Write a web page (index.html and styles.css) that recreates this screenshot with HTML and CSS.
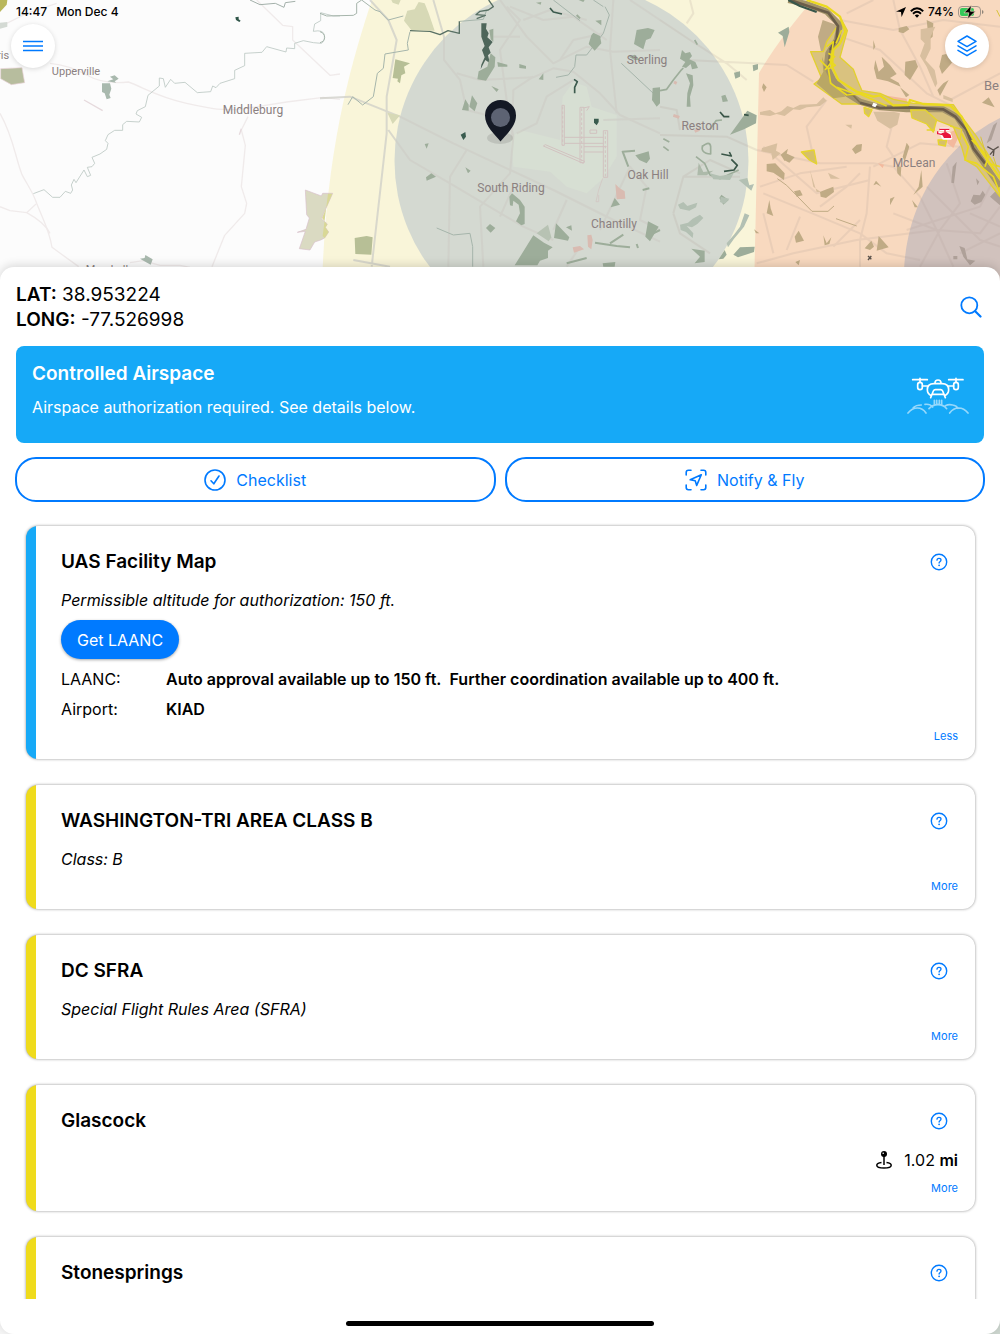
FILE: index.html
```html
<!DOCTYPE html>
<html lang="en">
<head>
<meta charset="utf-8">
<meta name="viewport" content="width=device-width, initial-scale=1">
<title>Airspace</title>
<link rel="stylesheet" href="styles.css">
</head>
<body>
<svg class="defs" width="0" height="0" aria-hidden="true">
  <symbol id="help" viewBox="0 0 18 18">
    <circle cx="9" cy="9" r="7.7" fill="none" stroke="currentColor" stroke-width="1.4"/>
    <path d="M7 7.2c0-1.2.9-1.9 2-1.9s2 .7 2 1.7c0 .9-.5 1.3-1.1 1.7-.6.4-.8.7-.8 1.4" fill="none" stroke="currentColor" stroke-width="1.3" stroke-linecap="round"/>
    <circle cx="9.1" cy="12.3" r=".9" fill="currentColor"/>
  </symbol>
</svg>
<div class="app">
  <header class="top">
    <svg class="map" viewBox="0 0 1000 290" preserveAspectRatio="xMidYMin slice" aria-hidden="true">
      <rect width="1000" height="290" fill="#fcfcfc"/>
      <path d="M372 0C352 60 325 150 322 290H1000V0Z" fill="#f9f5d9"/>
      <!-- west: open country -->
      <g transform="scale(.33333)" fill="none" stroke-linejoin="round">
        <g stroke="#f0ebeb" stroke-width="4">
          <path d="M150 190Q210 196 260 225T385 246C430 262 470 290 560 310S660 330 720 328L860 306L970 292L1020 298"/>
          <path d="M0 340C40 410 45 470 66 524C85 560 98 575 110 610C125 650 148 690 156 742L236 800"/>
          <path d="M0 620L30 632L80 638C120 660 140 680 150 700M80 638L108 612"/>
          <path d="M744 350L724 390L736 436L724 560L740 610L734 640L674 706L636 800M390 788L430 782L480 796H540L570 802"/>
          <path d="M770 0L848 76L878 80V120L990 226L1020 222M0 80L80 40L170 10"/>
        </g>
        <path d="M100 581L132 569L158 592H180L196 574L212 580L218 570L214 555L222 538L228 548L252 510L262 530L272 526L262 502L276 500L284 490L276 472L300 462L320 448L324 430L316 422L324 404L344 391H368V374L380 364L418 366L425 352L408 342L412 332L436 320L444 286L478 258V234L490 236L496 262L512 238L524 250L555 247L592 278L632 275L638 258L648 263L660 250L704 236V211L734 197V160L786 157L800 140L858 156L860 144L884 146V130L910 122L940 128L964 130Q975 124 973 106T940 94L944 72L962 62V38L1000 48H1020" stroke="#bcc8c3" stroke-width="2.5"/>
        <path d="M750 0L780 14L826 10L852 22L856 8L886 4" stroke="#a3b0aa" stroke-width="3"/>
        <path d="M252 300L308 332M724 386L718 404" stroke="#e6dadd" stroke-width="4"/>
        <path d="M0 0H22L20 14L0 36Z" fill="#b9b75c"/>
        <path d="M0 68L22 66V80L0 86Z" fill="#d4dad4"/>
        <path d="M2 206L66 203L74 248L34 254L2 236Z" fill="#b7bd9e" stroke="#ead3da" stroke-width="2"/>
        <path d="M330 230L344 226L356 236L344 244L348 248L322 244L340 238ZM306 250H330L334 266L328 284L332 294L320 298L314 280L306 276ZM420 776L434 774L436 765L458 778L452 794Z" fill="#a9b9ae"/>
        <path d="M706 52L716 50V58L722 62L718 66L708 60Z" fill="#2f5548"/>
        <path d="M916 570L964 588L968 580H998L964 656L982 672L976 682L986 696L974 714L962 720L944 726L930 750L898 746L916 694L892 697L918 688L928 654L920 644Z" fill="#dadac2" stroke="#d8bfcb" stroke-width="2"/>
        <path d="M984 581H997L966 654L982 674L976 682L986 696L974 714L968 708Z" fill="#d9d896"/>
      </g>
      <!-- class B core around the airport -->
      <circle cx="571.5" cy="161" r="177" fill="#d4d9d1"/>
      <g transform="translate(320) scale(.33333)" fill="none" stroke-linejoin="round">
        <path d="M728 290L760 245L800 260L815 320L890 345L890 470L850 535L800 580L740 560L690 515L580 500L572 415L600 390L720 420Z" fill="#d7dfd3"/>
        <g stroke="#cfcfc8" stroke-width="6" opacity=".75">
          <path d="M0 295L90 290L240 350L400 430L560 505L700 570L880 660L1020 725"/>
          <path d="M150 0L205 60L230 120L200 290V400L155 800M205 390L270 480L390 550L610 680L700 720M100 780L210 800"/>
          <path d="M340 0L372 110V180L420 240L440 330L500 345M410 220L480 240L640 232L700 205L760 215L840 280L900 345L1020 400"/>
          <path d="M540 0L620 110L700 190L800 140L880 155L1020 150M560 20L600 60L540 150L560 300L580 410L570 520L480 620L490 800"/>
          <path d="M880 0L870 150L890 340M930 0L1020 60M590 400L650 370L680 290L760 240M440 450L390 530L385 800M640 230L580 270L575 420"/>
          <path d="M850 360L1020 355M840 690L930 500L980 560L960 660L1020 690M700 690L740 600M780 740L740 800M720 180L760 120L850 100"/>
          <path d="M570 20L670 60L760 50L860 120M600 110H520M610 60L690 30L800 60M540 650L580 560"/>
        </g>
        <g stroke="#d2c2c0" stroke-width="3">
          <path d="M726 316H733V436H726ZM780 322H792V488H780ZM850 392H863V532H850ZM733 412H850M733 430H850M792 456H850M670 438L676 434L794 484L790 490ZM790 324L808 320L800 332M810 390H830V400H810ZM792 440H860"/>
          <path d="M848 535L836 570L828 605H836V585" stroke-width="2"/>
          <path d="M728 320V434M785 325V484M856 395V530" stroke-dasharray="8 6"/>
        </g>
        <g stroke="#a6b5ab" stroke-width="3">
          <path d="M0 40L20 48L100 46L110 40V10L125 0M125 0L165 30L180 35L205 60L250 48M270 95L262 130L265 150L195 162L190 205L172 220L160 290L128 315L98 290L84 314"/>
          <path d="M420 64L490 58L500 30M855 20L868 45L850 100L800 165H768L764 200L745 225L708 232M700 0L780 62M904 190L1000 280M350 684L400 705L450 700L458 740V800M820 0L850 20"/>
          <path d="M0 95Q14 100 14 112T0 128"/>
        </g>
        <path d="M270 92L330 94L360 104L384 92L418 100V64M506 0L520 20L505 30L480 34L468 44L496 46L470 56" stroke="#587064" stroke-width="4"/>
        <path d="M484 70H500L498 86L506 100L502 112L518 126L506 142L512 158L504 166L510 190L496 180L482 208L484 194L494 172L486 150L494 138L484 110Z" fill="#4e665a"/>
        <path d="M422 404L436 396L438 410L430 420ZM822 356H836V366L830 376L822 368Z" fill="#395b4e"/>
        <path d="M762 238L772 245L764 262V280M690 24L700 36L726 42" stroke="#3c5b4e" stroke-width="5"/>
        <g fill="#9dad9a">
          <path d="M508 90L520 86V125L512 118ZM512 160L526 172L524 200L498 242L472 238L476 214L502 200ZM532 186L562 194V200L534 200ZM598 192L618 198V206L598 204ZM514 258L536 268L530 276ZM656 238L670 220V240ZM436 298L446 314V332L426 330ZM456 286L472 310L464 334L448 320ZM314 432L326 430L320 446ZM318 532L334 520L348 530L320 542ZM436 502L452 512L444 520ZM498 684L510 672L526 684L512 698Z"/>
          <path d="M820 98L840 108L844 130L824 152L806 132L814 106ZM950 90L984 84L1004 90L992 115L978 120L970 148L942 132ZM826 62L844 60V76ZM998 264L1020 262V310L1010 320L996 300ZM984 664L1016 680L990 724L976 710ZM708 670L748 712L744 722L702 714ZM738 682L754 676L756 692ZM884 594L900 614L872 622ZM584 796L640 706L672 728L698 742L684 752V774L660 782L652 796ZM848 790L886 786L884 800H850ZM648 8L664 6L662 14ZM776 0L794 0L790 6ZM926 170L944 164L960 180L944 180Z"/>
          <path d="M946 466L986 454L990 476L980 490L958 480Z"/>
          <path d="M568 590L576 580L600 600L614 620V672L604 676L588 664L600 640L596 614L580 602L578 618L570 616Z"/>
        </g>
        <g stroke="#9dad9a" stroke-width="6">
          <path d="M925 500L908 455L945 452M968 570L988 565M780 55L770 45M825 728L890 738L930 742M870 730L910 704M740 790L800 774M1000 700L1020 690M950 732L954 744"/>
        </g>
        <path d="M650 700L684 674L694 712L686 724Z" fill="#b7c2b3"/>
        <path d="M252 62L262 32L284 28L296 6L314 10L326 40L344 92L274 90ZM214 0L242 0L236 14L218 8ZM202 338L240 346L218 372Z" fill="#d7d9b6"/>
        <path d="M226 178L270 190L252 200L256 220L244 226L240 250L232 244L234 236L218 234ZM104 714L140 708L158 712L154 764L106 762Z" fill="#b7bf96"/>
        <path d="M886 552L898 564L914 574L916 596L890 598ZM802 706L814 704L818 720L814 748L804 740ZM758 742L780 738L792 748L762 758Z" fill="#d9bbb1"/>
      </g>
      <!-- inner rings to the east -->
      <path d="M813 0C795 20 773 49 759 73L754 290H1000V0Z" fill="#f8d9bf"/>
      <path d="M1000 118C955 140 900 195 904 290H1000Z" fill="#d1c2bd"/>
      <g transform="translate(660) scale(.33333)" fill="none" stroke-linejoin="round">
        <g stroke="#b6a39b" stroke-width="6" opacity=".2">
          <path d="M0 60L90 120L200 190L260 240M80 180L380 195L460 245M0 405L200 410L290 450L480 490H640L700 500L780 590L830 690L960 700L1020 620"/>
          <path d="M630 500L620 640L600 720V800M290 790L400 760L590 720L830 690M300 560L420 520L560 500M310 580L480 650L600 700M640 500L780 430L900 440"/>
          <path d="M540 60L700 90L850 60L1020 80M540 110L660 150L800 280L880 320M560 40L640 0M700 0L720 90L780 200L820 290M870 300L1020 220"/>
          <path d="M40 640L70 530L150 480L240 520M70 530H240M40 640L60 700L150 760M480 620L560 560L600 520M460 470L440 380L500 300M520 740L600 660M310 640L340 760M700 640L830 690L880 800M740 690L960 620L1000 540M800 560L960 720L1020 740M860 490L900 610L840 690L780 800M930 640L1020 680M900 760L1020 700M310 440L470 580L630 540"/>
          <path d="M90 0L100 40L80 70M600 700L680 760L780 780M0 320L50 330L60 390M720 500L680 440L700 360M380 750L420 650"/>
        </g>
        <g fill="#c0ab85">
          <path d="M488 60L530 75L520 140L485 165L474 110ZM716 84L740 78L748 88L730 100L716 96ZM800 60L820 70L818 110L806 120ZM846 165L868 160L876 188L846 222L838 200ZM736 185L766 180L774 200L750 240L734 225ZM646 180L656 215L672 200L665 170L690 195L710 222L690 234L716 248L722 260L684 244L650 236L642 205ZM720 262L748 285L738 292ZM966 308L986 292L1004 322Z"/>
          <path d="M576 448L590 434L606 432L604 452L586 462ZM480 576L500 568L520 560L522 576L498 594L482 590ZM378 460L404 472L388 488L372 480ZM404 710L416 692L432 722L408 728ZM614 745L634 722L642 740L630 750ZM656 708L686 742L650 752ZM310 250L320 262L312 276L306 262ZM320 492L346 490L374 520L372 540L340 518L320 514ZM640 556L648 542L664 560L650 552ZM710 498L724 500L722 530L712 520ZM756 600L774 622L764 622ZM402 574L420 570L428 586L410 590ZM328 600L332 625L340 648L320 640ZM282 688L298 700L288 700ZM490 706L500 730L514 712L508 732L494 736ZM406 786L420 780L416 796ZM362 464L384 446L374 484Z"/>
          <path d="M740 428L728 470L734 485L748 440ZM784 510L776 560L760 585L788 560ZM850 250L866 240L840 288L832 270ZM640 120L646 140L640 150ZM690 596L704 590L690 616Z"/>
        </g>
        <g fill="#d8bf9f">
          <path d="M782 88L826 80L812 110V146L796 180L824 210L832 250L826 262L800 200L780 168L794 130L782 118ZM640 335H700L720 340L712 374L690 386L652 362ZM300 336L330 330L346 340L364 334L382 318L400 324L420 314L470 312L490 292L500 302L480 318L440 322L420 330L400 328L374 348L350 342L330 348L300 344ZM306 444L352 430L348 452L362 460L338 480L334 460L304 454ZM504 518L540 536H512ZM450 510L460 560L482 576L470 576ZM556 374H576L574 386ZM850 285L878 296V306L850 296Z"/>
        </g>
        <path d="M352 536L380 556L456 634H504L522 618M528 656L590 678" stroke="#c0ab85" stroke-width="3"/>
        <g fill="#9dad9a">
          <path d="M210 404L262 332L290 346L288 370L252 388ZM222 218L240 214V230L226 236ZM278 196L294 192V208L280 214ZM184 288L196 284L204 304L188 306ZM354 98L386 80L388 96L374 142L368 108ZM176 778L194 750L200 764L190 776ZM220 764L240 742L284 740L282 756L234 772ZM94 746L134 752V786L104 790L120 770ZM184 584L206 600L190 614L178 594Z"/>
          <path d="M116 488L130 516L160 512L140 526H112Z" opacity=".7"/>
          <path d="M66 150L76 160L90 156L96 168L88 178L106 186L114 204L96 208L92 192L78 204L66 200L76 186L60 176ZM78 220L98 226L100 256L90 290L92 320H80L82 280L90 250Z"/>
        </g>
        <g stroke="#9dad9a" stroke-width="5">
          <path d="M150 388L168 362L186 360M10 416L28 426M10 440L26 452M104 120L112 134M0 272L20 268L40 240L62 212L70 204"/>
          <path d="M126 440Q150 420 152 440V462Q120 460 128 436M108 470L134 490L150 525L180 536L210 522L236 510"/>
        </g>
        <g fill="#b3c0b3">
          <path d="M54 614L70 606L82 618L112 608L108 622L88 632L60 626ZM60 674L84 668L98 656L120 644L130 654L112 672L96 682L80 678L100 700L98 714L78 696L62 690ZM254 640L268 646L252 680L236 700L222 716L204 742L200 730L222 704L240 680ZM236 540L262 534L268 556L282 552L274 572L260 560ZM150 520L180 528L220 522L210 540L160 538ZM182 590L208 596L194 612L180 606Z"/>
        </g>
        <path d="M180 336L192 350H208M184 462L214 468L208 456M214 478L232 496L222 510L192 514M252 344L266 346" stroke="#3a5648" stroke-width="5"/>
        <path d="M42 246L50 250M40 346L58 352M104 394L118 388" stroke="#d9bbb1" stroke-width="9"/>
        <path d="M672 286L740 296L742 312L700 308ZM654 490L672 494L668 504ZM862 400L886 390L896 410L880 444L862 430Z" fill="#f3b99d"/>
        <g fill="#afa199">
          <path d="M932 604L940 584L960 586L968 572L976 584L964 606L944 614ZM898 738L914 744L922 778L946 782L930 796L910 770ZM1000 376L1012 366L994 420L980 430ZM948 535L958 545L952 556ZM880 768H892V778H880ZM878 500L890 485L882 550L874 548ZM990 590L1020 560V616Z"/>
        </g>
        <path d="M982 440L1000 450L1016 440M990 464L1002 450L1000 468M624 768L634 778M634 768L624 780" stroke="#5c534c" stroke-width="4"/>
        <!-- Potomac corridor -->
        <path d="M452 155L490 155L500 125L545 60L562 92L540 172L580 208L592 240L606 272L660 280L700 298L760 310L880 314L905 350L950 410L1020 520V590L950 500L916 480L905 440L880 380L750 330L640 325L600 312L545 312L462 252L485 235Z" fill="#d9c27f" stroke="#e2d02f" stroke-width="4"/>
        <path d="M486 170L500 210L530 262L556 290L520 295L470 250L490 215Z" fill="#b9a765"/>
        <path d="M385 0L440 12L500 35L540 75L530 120L505 160L500 200L520 240L560 280L600 305L660 322L740 328L850 328L890 350L920 395L945 450L1020 560" stroke="#a3936a" stroke-width="18"/>
        <path d="M390 0L450 20L505 38L534 78L530 118L510 150M600 308L660 324L740 322L850 328L886 350L920 390L940 445L975 490" stroke="#6b5d4a" stroke-width="8"/>
        <path d="M510 150L504 200M560 284L580 286L600 308" stroke="#857550" stroke-width="5"/>
        <path d="M385 0L420 18L470 36" stroke="#38564a" stroke-width="7"/>
        <path d="M440 0L500 20L540 50L556 95L540 130L520 150L516 200L535 240L590 275L640 290L660 286L700 316L745 315L750 300L790 312L870 316L905 350L930 400L955 440L1020 535" stroke="#ead91f" stroke-width="7"/>
        <path d="M500 140L520 125L512 190L495 210M480 180L505 205L512 250L560 285L600 282L640 300L680 318M530 262L580 280M545 90L528 130M905 400L925 440L915 480L950 490L1000 530L1020 580M935 420L985 470L975 500M985 490L1020 500M505 160L524 170L508 180L526 196L506 206" stroke="#ead91f" stroke-width="5"/>
        <path d="M752 330H796L830 360L820 396L800 372L756 354ZM424 456L462 450L470 492L448 480ZM612 322L636 330L626 350L614 340ZM834 420H860L856 438L836 434Z" fill="#d6c06a" stroke="#e6d52c" stroke-width="4"/>
        <path d="M800 390H825M870 378L905 388L900 420" stroke="#e6d52c" stroke-width="4"/>
        <path d="M640 308L652 312L646 322L636 318Z" fill="#fff"/>
        <path d="M962 410L980 470M1010 30L1020 50M1000 470L1010 500" stroke="#d8c33a" stroke-width="3"/>
        <!-- heliport marker -->
        <g stroke="#fff" stroke-width="10"><path d="M840 388H868M834 399L850 404M846 402H868L872 414H850Z"/></g>
        <path d="M838 388H868M833 394V401L848 404M855 388V398" stroke="#e8183c" stroke-width="4"/>
        <path d="M844 400L858 396L872 404L874 414H852Z" fill="#e8183c"/>
      </g>
      <g class="place" text-anchor="middle">
        <text x="76" y="75" font-size="11">Upperville</text>
        <text x="253" y="114" font-size="12">Middleburg</text>
        <text x="-3" y="59" font-size="11" text-anchor="start">ris</text>
        <text x="107" y="273" font-size="11">Marshall</text>
        <text x="511" y="192" font-size="12">South Riding</text>
        <text x="647" y="64" font-size="12">Sterling</text>
        <text x="700" y="130" font-size="12">Reston</text>
        <text x="648" y="179" font-size="12">Oak Hill</text>
        <text x="614" y="228" font-size="12">Chantilly</text>
        <text x="914" y="167" font-size="12">McLean</text>
        <text x="984" y="90" font-size="13" text-anchor="start">Be</text>
      </g>
      <ellipse cx="500" cy="138" rx="13" ry="6" fill="#000" opacity=".1"/>
      <path d="M500.500 141.500C495 134 485 127 485 115.500A15.500 15.500 0 0 1 516 115.500C516 127 506 134 500.500 141.500Z" fill="#141925"/>
      <circle cx="500.500" cy="117.500" r="9.500" fill="#5d6373"/>
    </svg>
    <div class="status">
      <div class="status-side"><span>14:47</span><span>Mon Dec 4</span></div>
      <div class="status-side tight">
        <svg width="10" height="10" viewBox="0 0 10 10" aria-hidden="true"><path d="M10 0L5.600 10L5 5.100L0 4.500Z"/></svg>
        <svg width="14" height="11" viewBox="0 0 14 11" fill="none" stroke="#000" stroke-width="1.900" aria-hidden="true"><path d="M.8 4.200Q7-1.600 13.200 4.200M3 6.700Q7 3 11 6.700"/><path d="M7 10.800L4.800 8.500Q7 6.700 9.200 8.500Z" fill="#000" stroke="none"/></svg>
        <span>74%</span>
        <svg width="26" height="14" viewBox="0 0 26 14" aria-hidden="true"><rect x=".5" y="1.500" width="22" height="11" rx="3.500" fill="none" stroke="#a3968a"/><path d="M24 5v4q1.500-.5 1.500-2T24 5Z" fill="#8f8478"/><rect x="2" y="3" width="14" height="8" rx="2" fill="#34c759"/><path d="M13.500 0L6 7.800H10.800L9.500 14L17.500 6.200H12.500Z" fill="#000" stroke="#f8d9bf" stroke-width=".7"/></svg>
      </div>
    </div>
    <div class="controls">
      <button class="round" type="button" aria-label="Menu">
        <svg width="20" height="12" viewBox="0 0 20 12" stroke="currentColor" stroke-width="1.400" aria-hidden="true"><path d="M0 1.500H20M0 6H20M0 10.500H20"/></svg>
      </button>
      <button class="round" type="button" aria-label="Map layers">
        <svg width="20" height="22" viewBox="0 0 20 22" fill="none" stroke="currentColor" stroke-width="1.500" stroke-linejoin="round" stroke-linecap="round" aria-hidden="true"><path d="M10 1L19 6.300L10 11.600L1 6.300ZM1 10.800L10 16.100L19 10.800M1 15.400L10 20.700L19 15.400"/></svg>
      </button>
    </div>
  </header>

  <main class="sheet">
    <div class="coords">
      <div>
        <div><b>LAT:</b> 38.953224</div>
        <div><b>LONG:</b> -77.526998</div>
      </div>
      <button class="icon-button" type="button" aria-label="Search">
        <svg width="22" height="22" viewBox="0 0 22 22" fill="none" stroke="currentColor" stroke-linecap="round" aria-hidden="true"><circle cx="9.300" cy="9.300" r="8" stroke-width="1.800"/><path d="M15.200 15.200L20.500 20.500" stroke-width="2.200"/></svg>
      </button>
    </div>

    <section class="banner">
      <div>
        <h1>Controlled Airspace</h1>
        <p>Airspace authorization required. See details below.</p>
      </div>
      <svg width="62" height="38" viewBox="81 315 186 114" fill="none" stroke="#fff" stroke-width="5" stroke-linecap="round" stroke-linejoin="round" aria-hidden="true">
        <path d="M98 326H142M120 322V334M206 326H249M228 322V334M127 345H145M221 345H203M165 336Q165 327 174 327T183 336"/>
        <rect x="113" y="334" width="14" height="22" rx="7"/><rect x="221" y="334" width="14" height="22" rx="7"/>
        <path d="M154 374Q142 368 142 356Q142 338 162 338H186Q206 338 206 356Q206 368 194 374M152 380L160 360Q162 356 166 356H182Q186 356 188 360L196 380M158 370H190"/>
        <g opacity=".55"><path d="M163 388V399M170 388V399M178 388V399M185 388V399M84 426Q96 411 112 411T138 426M100 410Q108 402 124 402M135 400Q150 398 158 408M147 413Q158 401 174 401T200 413M196 404Q206 399 218 402Q230 404 234 412M209 426Q220 411 236 411T264 426"/></g>
      </svg>
    </section>

    <div class="actions">
      <button class="outline" type="button">
        <svg width="22" height="22" viewBox="0 0 22 22" fill="none" stroke="currentColor" stroke-width="1.600" stroke-linecap="round" stroke-linejoin="round" aria-hidden="true"><circle cx="11" cy="11" r="10"/><path d="M7 11.800L9.800 14.800L15 7"/></svg>
        Checklist
      </button>
      <button class="outline" type="button">
        <svg width="22" height="22" viewBox="0 0 22 22" fill="none" stroke="currentColor" stroke-width="1.600" stroke-linecap="round" stroke-linejoin="round" aria-hidden="true"><path d="M1.200 6V3.400Q1.200 1.200 3.400 1.200H6M16 1.200H18.600Q20.800 1.200 20.800 3.400V6M20.800 16V18.600Q20.800 20.800 18.600 20.800H16M6 20.800H3.400Q1.200 20.800 1.200 18.600V16"/><path d="M16.300 5.700L5.200 10.800L10.200 11.800L11.700 16.400Z"/></svg>
        Notify &amp; Fly
      </button>
    </div>

    <div class="list">
      <article class="card info">
        <div class="card-head"><h2>UAS Facility Map</h2><button class="icon-button" type="button" aria-label="Help"><svg width="18" height="18"><use href="#help"/></svg></button></div>
        <p class="summary"><i>Permissible altitude for authorization: 150 ft.</i></p>
        <button class="primary" type="button">Get LAANC</button>
        <table class="facts">
          <tr><th scope="row">LAANC:</th><td>Auto approval available up to 150 ft.&nbsp; Further coordination available up to 400 ft.</td></tr>
          <tr><th scope="row">Airport:</th><td>KIAD</td></tr>
        </table>
        <a class="toggle" href="#">Less</a>
      </article>
      <article class="card">
        <div class="card-head"><h2>WASHINGTON-TRI AREA CLASS B</h2><button class="icon-button" type="button" aria-label="Help"><svg width="18" height="18"><use href="#help"/></svg></button></div>
        <p class="summary"><i>Class: B</i></p>
        <a class="toggle" href="#">More</a>
      </article>
      <article class="card">
        <div class="card-head"><h2>DC SFRA</h2><button class="icon-button" type="button" aria-label="Help"><svg width="18" height="18"><use href="#help"/></svg></button></div>
        <p class="summary"><i>Special Flight Rules Area (SFRA)</i></p>
        <a class="toggle" href="#">More</a>
      </article>
      <article class="card">
        <div class="card-head"><h2>Glascock</h2><button class="icon-button" type="button" aria-label="Help"><svg width="18" height="18"><use href="#help"/></svg></button></div>
        <p class="summary distance">
          <svg width="16" height="18" viewBox="0 0 16 18" fill="none" stroke="#000" aria-hidden="true"><circle cx="8" cy="3" r="3" fill="#000" stroke="none"/><circle cx="7.200" cy="2.200" r=".8" fill="#fff" stroke="none"/><path d="M8 5V14" stroke-width="1.500"/><path d="M5.500 11.600Q.8 12.300.8 14.200C.8 18 15.200 18 15.200 14.200Q15.200 12.300 10.500 11.600" stroke-width="1.500"/></svg>
          <span>1.02 <b>mi</b></span>
        </p>
        <a class="toggle" href="#">More</a>
      </article>
      <article class="card">
        <div class="card-head"><h2>Stonesprings</h2><button class="icon-button" type="button" aria-label="Help"><svg width="18" height="18"><use href="#help"/></svg></button></div>
      </article>
    </div>
    <div class="home"><span></span></div>
  </main>
</div>
</body>
</html>
```
FILE: styles.css
```css
* { box-sizing: border-box; }

body {
  margin: 0;
  font-family: Inter, "Liberation Sans", sans-serif;
  font-size: 16px;
  line-height: 24px;
  color: #000;
}

h1, h2, p { margin: 0; }
b, h1, h2 { font-weight: 600; }
svg { display: block; flex: none; }

button {
  font: inherit;
  padding: 0;
  border: 0;
  background: none;
  color: #007aff;
  cursor: pointer;
}

.defs { position: absolute; }

.app {
  height: 100vh;
  display: flex;
  flex-direction: column;
  overflow: hidden;
  background: linear-gradient(90deg, #f6f6f6 50%, #cdd6cf 50%);
}

.top {
  position: relative;
  flex: none;
  height: 267px;
}

.map {
  position: absolute;
  top: 0;
  left: 0;
  width: 100%;
  height: 290px;
}

.place {
  font-family: Roboto, "Liberation Sans", sans-serif;
  fill: #8b8080;
}

.status {
  position: relative;
  display: flex;
  justify-content: space-between;
  height: 24px;
  padding: 0 16px;
  font-size: 12px;
  font-weight: 500;
}

.status-side { display: flex; align-items: center; gap: 9px; }
.status-side.tight { gap: 4px; }

.controls {
  position: relative;
  display: flex;
  justify-content: space-between;
  padding: 0 11px;
}

.round {
  width: 44px;
  height: 44px;
  border-radius: 50%;
  background: #fff;
  box-shadow: 0 1px 5px rgba(0, 0, 0, .15);
  display: grid;
  place-items: center;
}

.sheet {
  position: relative;
  flex: 1;
  min-height: 0;
  display: flex;
  flex-direction: column;
  padding-top: 15px;
  border-radius: 14px;
  background: #fff;
  box-shadow: 0 -2px 10px rgba(0, 0, 0, .14);
}

.coords {
  display: flex;
  justify-content: space-between;
  align-items: center;
  padding: 0 18px 0 16px;
  font-size: 19px;
  line-height: 25px;
}

.icon-button { display: block; }

.banner {
  display: flex;
  justify-content: space-between;
  align-items: center;
  margin: 14px 16px;
  padding: 15px 15px 24px 16px;
  border-radius: 8px;
  background: #16a9f7;
  color: #fff;
}

.banner h1 { font-size: 19px; line-height: 26px; margin-bottom: 8px; }
.banner svg { margin-top: 10px; }

.actions {
  display: grid;
  grid-template-columns: 1fr 1fr;
  gap: 9px;
  padding: 0 15px;
}

.outline {
  display: flex;
  justify-content: center;
  align-items: center;
  gap: 10px;
  height: 45px;
  border: 2px solid #007aff;
  border-radius: 21px;
}

.list {
  flex: 1;
  min-height: 0;
  overflow-y: auto;
  scrollbar-width: none;
  padding: 24px 25px 0 26px;
}

.card {
  min-height: 124px;
  margin-bottom: 26px;
  padding: 22px 17px 15px 35px;
  border-radius: 12px;
  background: linear-gradient(#efdb1c, #efdb1c) left / 10px 100% no-repeat #fff;
  box-shadow: 0 0 3px rgba(0, 0, 0, .45);
}

.card.info { background-image: linear-gradient(#16a9f7, #16a9f7); }

.card-head {
  display: flex;
  justify-content: space-between;
  align-items: center;
  padding-right: 10px;
  margin-bottom: 13px;
}

.card h2 { font-size: 19px; line-height: 27px; }

.summary { padding-bottom: 3px; }

.distance {
  display: flex;
  justify-content: flex-end;
  align-items: center;
  gap: 12px;
  min-height: 29px;
}

.primary {
  height: 39px;
  margin: 5px 0;
  padding: 0 16px;
  border-radius: 20px;
  background: #007aff;
  color: #fff;
  display: block;
  box-shadow: 0 1px 3px rgba(0, 0, 0, .35);
}

.facts { border-collapse: collapse; line-height: 30px; }
.facts th, .facts td { padding: 0; text-align: left; }
.facts th { width: 105px; font-weight: 400; }
.facts td { font-weight: 600; }

.toggle {
  display: block;
  width: fit-content;
  margin: 4px 0 0 auto;
  font-size: 11px;
  line-height: 16px;
  color: #007aff;
  text-decoration: none;
}

.home {
  display: flex;
  justify-content: center;
  align-items: flex-end;
  height: 35px;
  padding-bottom: 8px;
}

.home span {
  width: 308px;
  height: 5px;
  border-radius: 3px;
  background: #000;
}
```
